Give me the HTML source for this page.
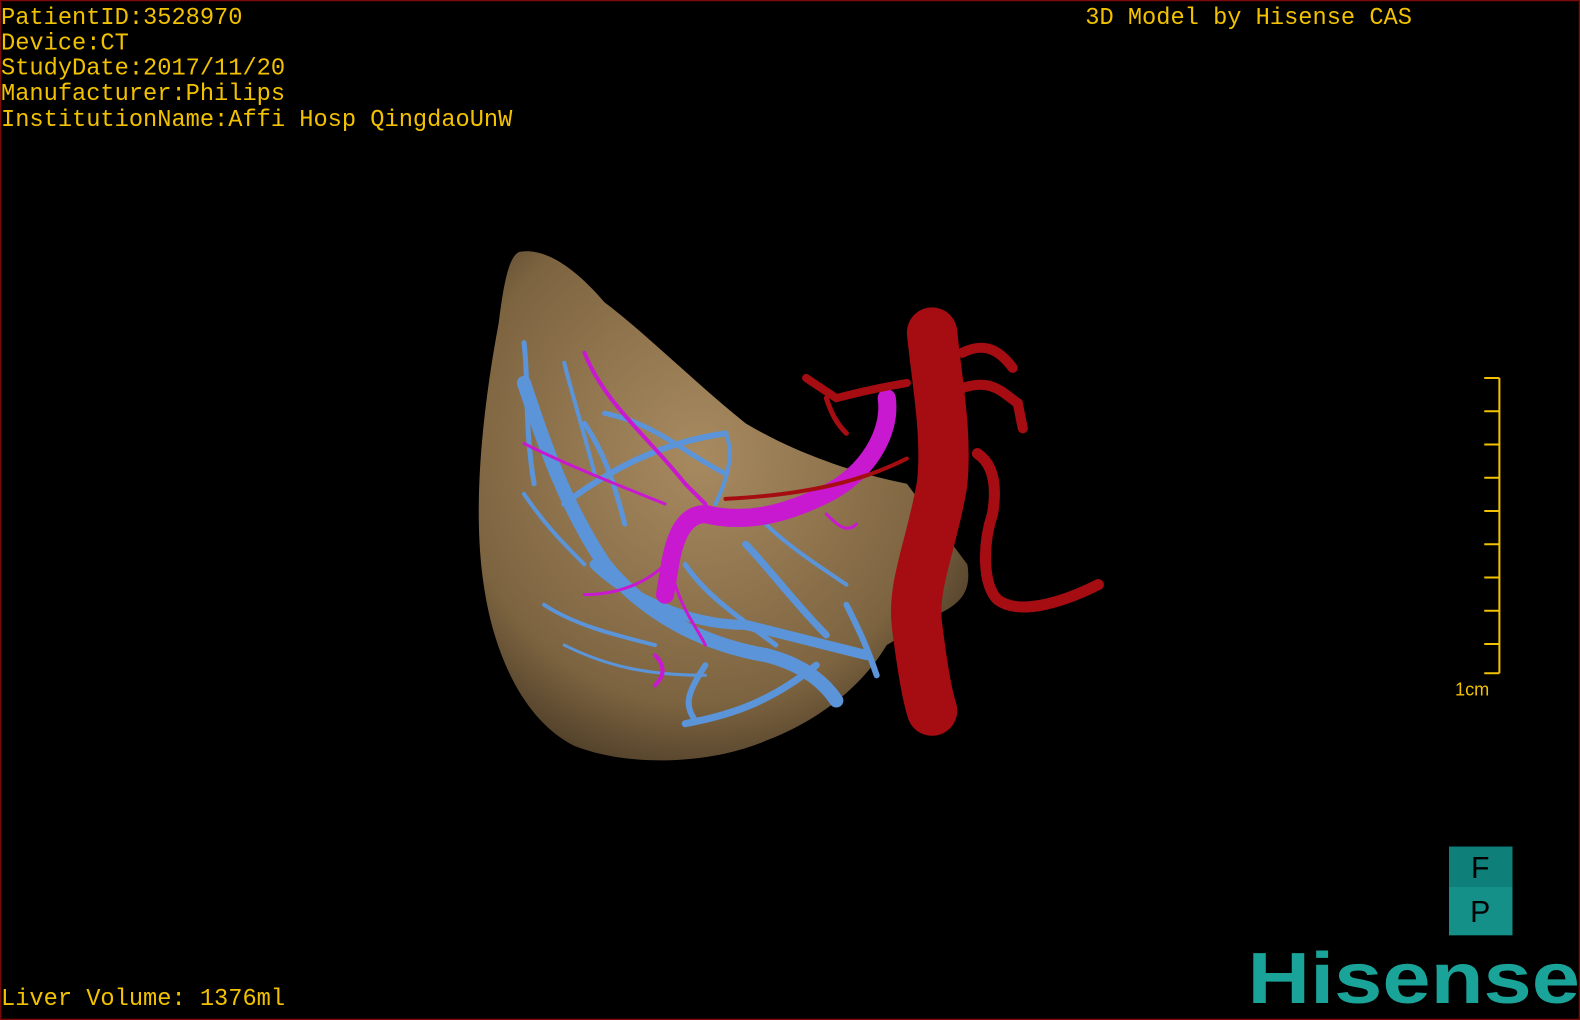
<!DOCTYPE html>
<html><head><meta charset="utf-8"><style>
html,body{margin:0;padding:0;background:#000;width:1580px;height:1020px;overflow:hidden}
svg{display:block}
.t{font-family:"Liberation Mono",monospace;fill:#f2c200;font-size:23.5px}
</style></head><body>
<svg width="1580" height="1020" viewBox="0 0 1568 1012" preserveAspectRatio="none">
<rect x="0.5" y="0.5" width="1567" height="1011" fill="#000" stroke="#7a0a0a" stroke-width="1.5"/>
<text class="t" x="1" y="24">PatientID:3528970</text>
<text class="t" x="1" y="49">Device:CT</text>
<text class="t" x="1" y="74">StudyDate:2017/11/20</text>
<text class="t" x="1" y="99">Manufacturer:Philips</text>
<text class="t" x="1" y="125">InstitutionName:Affi Hosp QingdaoUnW</text>
<text class="t" x="1077" y="24">3D Model by Hisense CAS</text>
<text class="t" x="1" y="997">Liver Volume: 1376ml</text>
<defs>
<radialGradient id="lv" cx="0.45" cy="0.4" r="0.7">
<stop offset="0" stop-color="#a88a60"/><stop offset="0.7" stop-color="#7d6440"/><stop offset="1" stop-color="#3d3020"/>
</radialGradient>
</defs>
<path d="M515 250 C540 245 570 265 600 300 C640 330 690 380 740 420 C790 450 850 470 900 480 L960 560 C965 590 950 600 930 610 L880 640 C850 690 800 720 760 735 C700 760 620 760 570 740 C520 715 490 650 480 580 C468 500 480 400 495 320 C500 280 505 255 515 250Z" fill="url(#lv)"/>
<g fill="none" stroke="#5b94d8" stroke-linecap="round">
<path d="M520 380 C540 440 560 500 600 560 C640 610 700 640 760 650 C800 660 820 680 830 695" stroke-width="14"/>
<path d="M590 560 C620 590 680 620 740 620 L860 650" stroke-width="10"/>
<path d="M700 660 C680 690 680 700 690 715" stroke-width="6"/>
<path d="M810 660 C760 700 720 710 680 718" stroke-width="7"/>
<path d="M560 500 C600 470 650 440 720 430" stroke-width="6"/>
<path d="M580 420 C600 450 610 480 620 520" stroke-width="5"/>
<path d="M520 340 C525 380 520 420 530 480" stroke-width="5"/>
<path d="M560 360 C570 400 580 430 590 470" stroke-width="4"/>
<path d="M600 410 C650 420 680 450 720 470" stroke-width="5"/>
<path d="M740 540 C760 560 790 600 820 630" stroke-width="7"/>
<path d="M680 560 C700 590 730 610 770 640" stroke-width="5"/>
<path d="M540 600 C570 620 610 630 650 640" stroke-width="4"/>
<path d="M560 640 C600 660 640 670 700 670" stroke-width="3"/>
<path d="M520 490 C540 520 560 540 580 560" stroke-width="4"/>
<path d="M840 600 C850 620 860 640 870 670" stroke-width="6"/>
<path d="M720 430 C730 450 720 480 710 500" stroke-width="4"/>
<path d="M760 520 C780 540 810 560 840 580" stroke-width="4"/>
</g>
<g fill="none" stroke="#c919d0" stroke-linecap="round">
<path d="M880 395 C885 430 860 470 820 490 C780 510 740 520 700 510 C680 510 670 530 665 560 L660 590" stroke-width="18"/>
<path d="M580 350 C600 400 640 430 680 480 L700 500" stroke-width="4"/>
<path d="M520 440 C560 460 610 480 660 500" stroke-width="3"/>
<path d="M660 560 C640 580 610 590 580 590" stroke-width="3"/>
<path d="M670 580 C680 610 690 620 700 640" stroke-width="3"/>
<path d="M650 650 C660 660 660 670 650 680" stroke-width="4"/>
<path d="M820 510 C830 520 840 530 850 520" stroke-width="3"/>
</g>
<g fill="none" stroke="#a50d12" stroke-linecap="round">
<path d="M925 330 C930 380 940 430 935 480 C925 540 905 580 910 620 C915 660 920 690 925 705" stroke-width="50"/>
<path d="M955 350 C975 340 990 345 1005 365" stroke-width="10"/>
<path d="M955 385 C985 375 995 390 1010 400 L1015 425" stroke-width="10"/>
<path d="M900 380 C870 385 850 390 830 395 L800 375" stroke-width="8"/>
<path d="M820 395 C825 410 830 420 840 430" stroke-width="5"/>
<path d="M970 450 C985 460 990 480 985 510 C975 540 975 580 990 595 C1010 610 1050 600 1090 580" stroke-width="11"/>
<path d="M900 455 C870 470 820 490 720 495" stroke-width="4"/>
</g>
<g stroke="#f2c200" stroke-width="2" fill="none">
<path d="M1488 375 V668"/>
<path d="M1473 375 H1488 M1473 408 H1488 M1473 441 H1488 M1473 474 H1488 M1473 507 H1488 M1473 540 H1488 M1473 573 H1488 M1473 606 H1488 M1473 639 H1488 M1473 668 H1488"/>
</g>
<text x="1444" y="690" font-family="Liberation Sans,sans-serif" font-size="18" fill="#f2c200">1cm</text>
<rect x="1438" y="840" width="63" height="88" fill="#149089"/>
<rect x="1438" y="840" width="63" height="40" fill="#0f7f79"/>
<text x="1469" y="871" text-anchor="middle" font-family="Liberation Sans,sans-serif" font-size="30" fill="#000">F</text>
<text x="1469" y="915" text-anchor="middle" font-family="Liberation Sans,sans-serif" font-size="30" fill="#000">P</text>
<text x="1238" y="995" font-family="Liberation Sans,sans-serif" font-weight="bold" font-size="72" fill="#1aa398" textLength="330" lengthAdjust="spacingAndGlyphs">Hisense</text>
</svg>
</body></html>
